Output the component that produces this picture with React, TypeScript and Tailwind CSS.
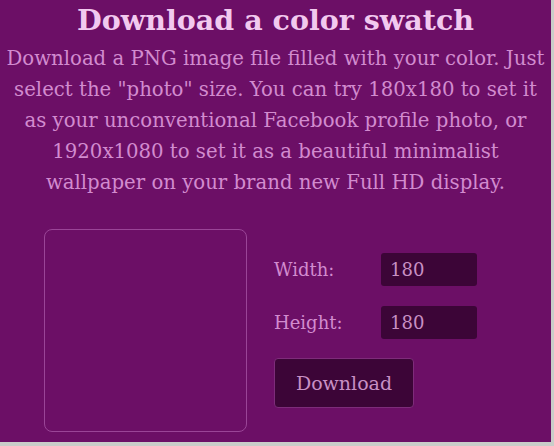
import React from "react";

export default function App() {
  return (
    <div className="w-[554px] h-[446px] bg-[#c9cdc9] overflow-hidden">
      <div className="w-[551px] h-[442px] bg-[#6c0f66] font-['DejaVu_Serif',serif] flex flex-col items-center">
        <h1 className="mt-[2px] text-[28.5px] leading-[36px] font-bold text-[#f2c9ef]">Download a color swatch</h1>
        <p className="mt-[5px] w-[551px] text-center text-[19.7px] leading-[31px] text-[#d28bcf] whitespace-nowrap">
          Download a PNG image file filled with your color. Just
          <br />
          select the "photo" size. You can try 180x180 to set it
          <br />
          as your unconventional Facebook profile photo, or
          <br />
          1920x1080 to set it as a beautiful minimalist
          <br />
          wallpaper on your brand new Full HD display.
        </p>
        <div className="self-stretch flex mt-[31px] pl-[44px]">
          <div className="w-[203px] h-[203px] rounded-[8px] border border-[#9a4597]" />
          <div className="ml-[27px] mt-[24px] flex flex-col">
            <div className="flex items-center h-[33px]">
              <span className="w-[107px] text-[18px] text-[#d28bcf]">Width:</span>
              <div className="w-[96px] h-[33px] rounded-[3px] bg-[#3c0537] px-[9px] flex items-center text-[18px] text-[#c890c4]">180</div>
            </div>
            <div className="flex items-center h-[33px] mt-[20px]">
              <span className="w-[107px] text-[18px] text-[#d28bcf]">Height:</span>
              <div className="w-[96px] h-[33px] rounded-[3px] bg-[#3c0537] px-[9px] flex items-center text-[18px] text-[#c890c4]">180</div>
            </div>
            <button className="mt-[19px] w-[140px] h-[50px] rounded-[4px] bg-[#3c0537] border border-[#7e2c7a] text-[19px] text-[#c890c4]">
              Download
            </button>
          </div>
        </div>
      </div>
    </div>
  );
}
